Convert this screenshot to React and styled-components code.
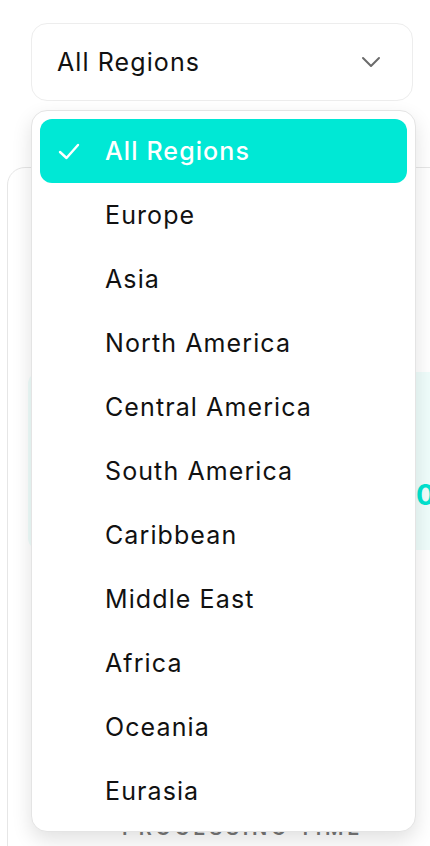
import React from "react";
import styled, { createGlobalStyle } from "styled-components";

const Global = createGlobalStyle`
  html, body { margin: 0; padding: 0; background: #ffffff; overflow: hidden; }
  body { font-family: Inter, "Noto Sans", "Liberation Sans", sans-serif; -webkit-font-smoothing: antialiased; }
  * { box-sizing: border-box; }
`;

const Page = styled.div`
  position: relative;
  width: 430px;
  height: 846px;
  overflow: hidden;
  padding-top: 23px;
`;

const Trigger = styled.button`
  display: flex;
  align-items: center;
  justify-content: space-between;
  margin-left: 31px;
  width: 382px;
  height: 78px;
  padding: 0 31px 0 25px;
  background: #fff;
  border: 1.5px solid #ededed;
  border-radius: 16px;
  font-family: inherit;
  font-size: 25px;
  letter-spacing: 1.1px;
  color: #111;
  cursor: pointer;
`;

const Card = styled.div`
  margin-top: 66px;
  margin-left: 7px;
  width: 460px;
  height: 760px;
  border: 1.5px solid #e6e6e6;
  border-radius: 18px;
  background: #fff;
  padding: 204px 0 0 0;
  display: flex;
  flex-direction: column;
`;

const StatPanel = styled.div`
  margin-left: 20px;
  width: 460px;
  height: 178px;
  background: #effdfb;
  border-radius: 12px;
  display: flex;
  align-items: flex-start;
  padding-left: 388px;
  padding-top: 109px;
`;

const StatValue = styled.span`
  font-size: 28px;
  line-height: 28px;
  font-weight: 700;
  color: #00e4d0;
`;

const Label = styled.div`
  margin-top: 266px;
  margin-left: 114px;
  font-size: 20px;
  line-height: 24px;
  font-weight: 600;
  letter-spacing: 3.8px;
  color: #777;
  text-transform: uppercase;
`;

const Menu = styled.ul`
  position: absolute;
  top: 110px;
  left: 31px;
  width: 385px;
  margin: 0;
  padding: 8px;
  list-style: none;
  background: #fff;
  border: 1.5px solid #e4e4e4;
  border-radius: 16px;
  box-shadow: 0 8px 20px rgba(0, 0, 0, 0.12);
`;

const Item = styled.li`
  display: flex;
  align-items: center;
  height: 64px;
  padding-left: 18px;
  border-radius: 12px;
  font-size: 25px;
  letter-spacing: 1.1px;
  font-weight: ${(p) => (p.$active ? 500 : 400)};
  color: ${(p) => (p.$active ? "#ffffff" : "#111111")};
  background: ${(p) => (p.$active ? "#00e8d5" : "transparent")};
`;

const CheckSlot = styled.span`
  width: 47px;
  display: flex;
  align-items: center;
`;

const regions = [
  "All Regions",
  "Europe",
  "Asia",
  "North America",
  "Central America",
  "South America",
  "Caribbean",
  "Middle East",
  "Africa",
  "Oceania",
  "Eurasia",
];

export default function App() {
  const selected = "All Regions";
  return (
    <>
      <Global />
      <Page>
        <Trigger>
          <span>All Regions</span>
          <svg width="20" height="12" viewBox="0 0 20 12" fill="none">
            <path d="M2 2l8 8 8-8" stroke="#6b6b6b" strokeWidth="2" strokeLinecap="round" strokeLinejoin="round" />
          </svg>
        </Trigger>
        <Card>
          <StatPanel>
            <StatValue>0</StatValue>
          </StatPanel>
          <Label>Processing Time</Label>
        </Card>
        <Menu>
          {regions.map((r) => (
            <Item key={r} $active={r === selected}>
              <CheckSlot>
                {r === selected && (
                  <svg width="22" height="17" viewBox="0 0 22 17" fill="none">
                    <path d="M2 9l6.5 6L20 2" stroke="#fff" strokeWidth="2.4" strokeLinecap="round" strokeLinejoin="round" />
                  </svg>
                )}
              </CheckSlot>
              {r}
            </Item>
          ))}
        </Menu>
      </Page>
    </>
  );
}
